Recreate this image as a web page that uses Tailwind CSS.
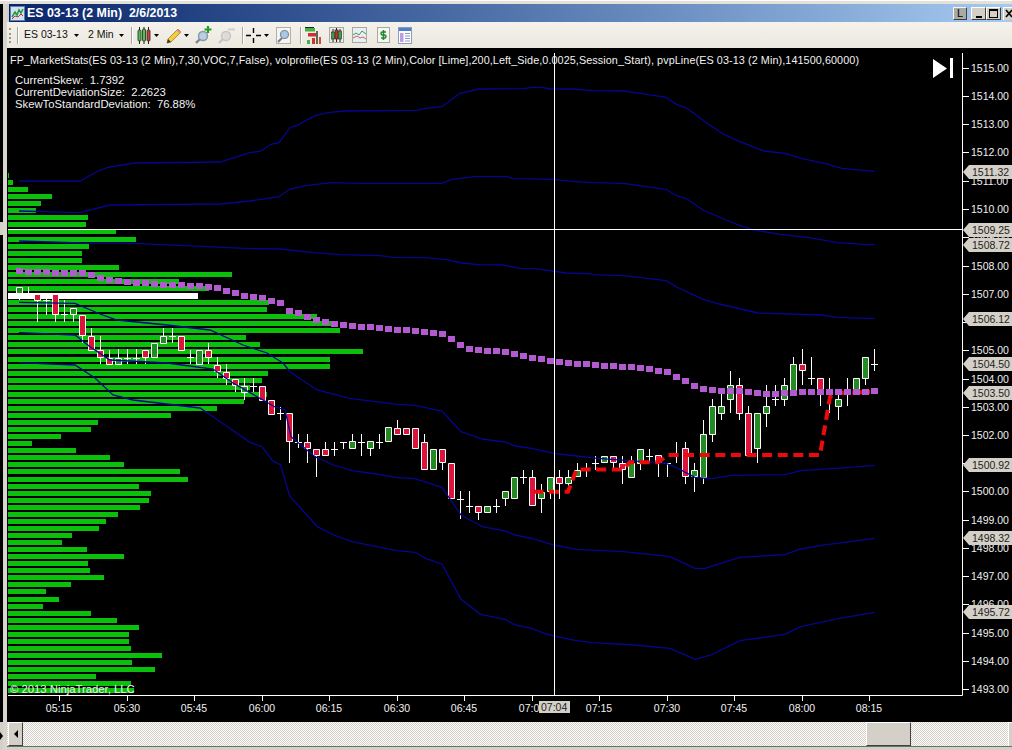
<!DOCTYPE html>
<html>
<head>
<meta charset="utf-8">
<title>ES 03-13 (2 Min) 2/6/2013</title>
<script src="https://cdn.jsdelivr.net/npm/@tailwindcss/browser@4"></script>
</head>
<body class="bg-black">
<div class="w-[1012px] h-[750px] overflow-hidden flex flex-col bg-[#d4d0c8] font-['Liberation_Sans',Arial,sans-serif]">
  <div class="h-[4px] shrink-0 border-t border-white bg-[#e4e1d8]"></div>
  <div class="flex flex-1 min-h-0">
    <!-- left edge -->
    <div class="w-[3px] bg-black flex flex-col">
      <div class="h-[218px] shrink-0"></div>
      <div class="h-[13px] shrink-0 bg-[#d4d0c8]"></div>
      <div class="flex-1"></div>
      <div class="h-[28px] shrink-0 bg-[#d4d0c8] flex items-center">
        <div class="w-0 h-0 border-y-[4px] border-y-transparent border-l-[3px] border-l-black"></div>
      </div>
    </div>
    <div class="w-[4px] bg-[#d8d5cc]"></div>
    <div class="flex-1 min-w-0 flex flex-col">
      <!-- title bar -->
      <div class="h-[18px] shrink-0 flex items-center bg-[#d4d0c8] pl-[2px]">
        <div class="flex-1 h-full flex items-center bg-gradient-to-r from-[#0a246a] to-[#a6caf0]">
          <svg class="ml-[1px] shrink-0" width="15" height="15" viewBox="0 0 15 15">
            <rect x=".5" y=".5" width="14" height="14" fill="#cfe2f5" stroke="#5d7fa8"/>
            <path d="M2 11l3-5 2 3 2-5 2 3 2-4" fill="none" stroke="#2a9a3a" stroke-width="1.6"/>
            <path d="M2 13l3-3 3 1 3-3 2 2" fill="none" stroke="#c03030" stroke-width="1"/>
          </svg>
          <span class="ml-[2px] text-white font-bold text-[12.4px] leading-none whitespace-pre">ES 03-13 (2 Min)  2/6/2013</span>
          <div class="flex-1"></div>
          <div class="w-[14px] h-[13px] flex items-center justify-center bg-[#aaa9a2] border border-t-[#f4f4f4] border-l-[#f4f4f4] border-b-[#404040] border-r-[#404040] text-[11px] leading-none text-black">L</div>
          <div class="ml-[4px] w-[15px] h-[13px] flex items-end justify-center pb-[1px] bg-[#d4d0c8] border border-t-white border-l-white border-b-[#404040] border-r-[#404040]"><div class="w-[6px] h-[2px] bg-black"></div></div>
          <div class="w-[15px] h-[13px] flex items-center justify-center bg-[#d4d0c8] border border-t-white border-l-white border-b-[#404040] border-r-[#404040]"><div class="w-[9px] h-[9px] border border-t-2 border-black"></div></div>
          <div class="ml-[2px] w-[9px] h-[13px] overflow-hidden bg-[#d4d0c8] border-t border-l border-t-white border-l-white">
            <svg width="9" height="12" viewBox="0 0 9 12"><path d="M2 2l6 7M8 2l-6 7" stroke="#000" stroke-width="1.6"/></svg>
          </div>
        </div>
      </div>
      <!-- toolbar -->
      <div class="h-[26px] shrink-0 flex items-center bg-gradient-to-b from-[#f4f2ec] to-[#ebe8df] text-[10.5px] text-[#111]">
        <div class="ml-[2px] w-[3px] h-[15px] border-l-2 border-dotted border-[#9a988f]"></div>
        <div class="ml-[5px] w-[2px] h-[17px] border-l border-r border-l-[#a8a69c] border-r-white"></div>
        <span class="ml-[5px] w-[50px]">ES 03-13</span>
        <svg class="shrink-0" width="5" height="3" viewBox="0 0 5 3"><path d="M0 0h5L2.500 3z"/></svg>
        <span class="ml-[9px] w-[31px]">2 Min</span>
        <svg class="shrink-0" width="5" height="3" viewBox="0 0 5 3"><path d="M0 0h5L2.500 3z"/></svg>
        <div class="ml-[7px] w-[2px] h-[17px] border-l border-r border-l-[#a8a69c] border-r-white"></div>
        <svg class="ml-[4px] shrink-0" width="14" height="17" viewBox="0 0 14 17">
          <path d="M2.500 0v17M7 0v17M11.500 0v17" stroke="#222"/>
          <rect x="1" y="3" width="3" height="11" rx="1" fill="#4fc34f" stroke="#222" stroke-width=".8"/>
          <rect x="5.500" y="2" width="3" height="12" rx="1" fill="#4fc34f" stroke="#222" stroke-width=".8"/>
          <rect x="10" y="3" width="3" height="11" rx="1" fill="#d63a3a" stroke="#222" stroke-width=".8"/>
        </svg>
        <svg class="ml-[3px] shrink-0" width="5" height="3" viewBox="0 0 5 3"><path d="M0 0h5L2.500 3z"/></svg>
        <svg class="ml-[7px] shrink-0" width="16" height="17" viewBox="0 0 16 17">
          <path d="M1 16l1-4L12 2l3 3L5 15z" fill="#f3cf3c" stroke="#a07a20" stroke-width=".8"/>
          <path d="M12 2l3 3-1.500 1.500-3-3z" fill="#e88a8a"/>
          <path d="M1 16l1-4 3 3z" fill="#333"/>
        </svg>
        <svg class="ml-[2px] shrink-0" width="5" height="3" viewBox="0 0 5 3"><path d="M0 0h5L2.500 3z"/></svg>
        <svg class="ml-[6px] shrink-0" width="17" height="18" viewBox="0 0 17 18">
          <path d="M1 17l5-5" stroke="#7a8490" stroke-width="2.400"/>
          <circle cx="8" cy="10" r="4.500" fill="#b8cfe6" stroke="#8a96a4" stroke-width="1.400"/>
          <path d="M13 0v7M9.500 3.500h7" stroke="#22a022" stroke-width="2.200"/>
        </svg>
        <svg class="ml-[6px] shrink-0" width="17" height="18" viewBox="0 0 17 18">
          <path d="M1 17l5-5" stroke="#c6c5c0" stroke-width="2.400"/>
          <circle cx="8" cy="10" r="4.500" fill="#dcdcd8" stroke="#c6c5c0" stroke-width="1.400"/>
          <path d="M10 3.500h7" stroke="#d0cfca" stroke-width="2"/>
        </svg>
        <div class="ml-[7px] w-[2px] h-[17px] border-l border-r border-l-[#a8a69c] border-r-white"></div>
        <svg class="ml-[2px] shrink-0" width="15" height="15" viewBox="0 0 15 15">
          <path d="M7.500 0v5M7.500 10v5M0 7.500h5M10 7.500h5" stroke="#000" stroke-width="1.400"/>
        </svg>
        <svg class="ml-[3px] shrink-0" width="5" height="3" viewBox="0 0 5 3"><path d="M0 0h5L2.500 3z"/></svg>
        <svg class="ml-[7px] shrink-0" width="15" height="17" viewBox="0 0 15 17">
          <rect x=".5" y=".5" width="14" height="16" fill="#f4f4f0" stroke="#b0b0a8"/>
          <path d="M2 15l4-4" stroke="#778" stroke-width="2"/>
          <circle cx="8.500" cy="7.500" r="4" fill="#a9c8e6" stroke="#7f8a96" stroke-width="1.200"/>
        </svg>
        <div class="ml-[9px] w-[2px] h-[17px] border-l border-r border-l-[#a8a69c] border-r-white"></div>
        <svg class="ml-[3px] shrink-0" width="16" height="18" viewBox="0 0 16 18">
          <path d="M0 1.500h9" stroke="#222"/>
          <rect x="0" y="2" width="10" height="3.500" fill="#45b045"/>
          <rect x="3" y="7" width="9" height="3.500" fill="#d03030"/>
          <rect x="11" y="5" width="2" height="13" fill="#5a6a5a"/>
          <rect x="14" y="11" width="2" height="7" fill="#d05030"/>
          <rect x="7" y="12" width="3" height="6" fill="#d03030"/>
          <rect x="2" y="14" width="3" height="4" fill="#45b045"/>
        </svg>
        <svg class="ml-[8px] shrink-0" width="15" height="16" viewBox="0 0 15 16">
          <rect x=".5" y=".5" width="14" height="15" fill="#ecebe4" stroke="#a8a8a0"/>
          <path d="M4 2v13M7.500 1v14M11 2v13" stroke="#222"/>
          <rect x="2.500" y="5" width="3" height="7" fill="#3f9f3f" stroke="#222" stroke-width=".6"/>
          <rect x="6" y="3" width="3" height="9" fill="#c03030" stroke="#222" stroke-width=".6"/>
          <rect x="9.500" y="4" width="3" height="8" fill="#3f9f3f" stroke="#222" stroke-width=".6"/>
        </svg>
        <svg class="ml-[8px] shrink-0" width="15" height="16" viewBox="0 0 15 16">
          <rect x=".5" y=".5" width="14" height="15" fill="#e6eef6" stroke="#a8a8a0"/>
          <path d="M1 8l3-2 3 2 3-4 4 3" fill="none" stroke="#3f9f4f"/>
          <path d="M1 11l4-2 3 2 3-1 3 2" fill="none" stroke="#d06060"/>
        </svg>
        <svg class="ml-[10px] shrink-0" width="13" height="16" viewBox="0 0 13 16">
          <rect x=".5" y=".5" width="12" height="15" fill="#f6f6f2" stroke="#a8a8a0"/>
          <path d="M9 5H5.500a1.500 1.500 0 0 0 0 3h2a1.500 1.500 0 0 1 0 3H4M6.500 3v10" fill="none" stroke="#1c8a2e" stroke-width="1.500"/>
        </svg>
        <svg class="ml-[8px] shrink-0" width="14" height="17" viewBox="0 0 14 17">
          <rect x=".5" y=".5" width="13" height="16" fill="#fff" stroke="#8a9ac0"/>
          <rect x="1" y="1" width="12" height="3" fill="#4f7fc8"/>
          <rect x="2" y="6" width="3.500" height="9" fill="#b9a0e0"/>
          <path d="M7 6.500h5M7 9h5M7 11.500h5M7 14h5" stroke="#8a9ac0"/>
        </svg>
      </div>
      <!-- chart -->
      <div class="h-[674px] shrink-0 bg-black">
        <svg width="1005" height="674" viewBox="7 48 1005 674" class="block" font-size="10.500">
          <path fill="none" stroke="#0ac00a" stroke-width="5" d="M8 175.500H9M8 182.500H13M8 189.500H28M8 196.500H52M8 203.500H41M8 210.500H36M8 217.500H88M8 224.500H86M8 231.500H116M8 239.500H136M8 246.500H89M8 253.500H82M8 260.500H82M8 267.500H119M8 274.500H232M8 281.500H179M8 288.500H209M8 302.500H269M8 309.500H267M8 316.500H317M8 323.500H333M8 330.500H340M8 337.500H246M8 344.500H260M8 351.500H363M8 359.500H330M8 366.500H330M8 373.500H268M8 380.500H262M8 387.500H250M8 394.500H267M8 401.500H244M8 408.500H217M8 415.500H171M8 422.500H98M8 429.500H91M8 436.500H61M8 443.500H32M8 450.500H76M8 457.500H110M8 464.500H124M8 471.500H180M8 479.500H188M8 486.500H139M8 493.500H151M8 500.500H149M8 507.500H140M8 514.500H118M8 521.500H106M8 528.500H99M8 535.500H72M8 542.500H62M8 549.500H87M8 556.500H124M8 563.500H88M8 570.500H90M8 577.500H104M8 584.500H71M8 591.500H46M8 599.500H59M8 606.500H43M8 613.500H91M8 620.500H117M8 627.500H139M8 634.500H129M8 641.500H129M8 648.500H131M8 655.500H162M8 662.500H132M8 669.500H155M8 676.500H96M8 683.500H131M8 690.500H134"/>
          <rect x="8" y="293" width="190" height="6" fill="#fff"/>
          <!-- wicks and crosses -->
          <path fill="none" stroke="#fff" d="M19.500 287V300M28.500 287V293M37.500 294V322M46.500 298V315M55.500 294V322M64.500 300V322M73.500 308V322M82.500 315V343M91.500 328V350M100.500 336V364M109.500 350V364M118.500 349V364M127.500 349V364M136.500 349V364M145.500 350V364M154.500 343V357M163.500 328V343M172.500 328V343M181.500 336V350M190.500 350V364M199.500 350V364M208.500 343V364M217.500 357V378M226.500 364V385M235.500 379V392M244.500 378V400M253.500 378V392M262.500 386V400M271.500 400V414M280.500 407V420M289.500 413V463M298.500 434V448M307.500 434V463M316.500 449V477M325.500 442V456M334.500 442V456M343.500 442V449M352.500 434V449M361.500 434V456M370.500 441V456M379.500 434V449M388.500 427V442M397.500 420V435M406.500 428V435M415.500 428V449M424.500 434V470M433.500 449V470M442.500 449V470M451.500 463V499M460.500 491V519M469.500 491V513M478.500 506V520M487.500 506V513M496.500 499V513M505.500 491V506M514.500 477V499M523.500 470V484M532.500 470V506M541.500 484V513M550.500 477V499M559.500 470V499M568.500 470V492M577.500 463V477M586.500 463V477M595.500 456V470M604.500 456V463M613.500 456V470M622.500 456V484M631.500 456V477M640.500 449V470M649.500 449V463M658.500 455V477M667.500 463V477M676.500 442V463M685.500 442V484M694.500 463V492M703.500 420V484M712.500 399V442M721.500 392V420M730.500 371V413M739.500 378V420M748.500 406V455M757.500 413V463M766.500 385V427M775.500 385V406M784.500 378V406M793.500 357V392M802.500 349V385M811.500 357V385M820.500 378V406M829.500 378V413M838.500 392V420M847.500 378V406M856.500 378V392M865.500 357V385M874.500 349V371"/>
          <path fill="none" stroke="#fff" d="M43 300.500h7M61 314.500h7M124 358.500h7M133 358.500h7M169 336.500h7M187 357.500h7M250 386.500h7M277 413.500h7M295 442.500h7M331 449.500h7M340 442.500h7M358 442.500h7M376 442.500h7M457 499.500h7M466 506.500h7M493 506.500h7M520 477.500h7M583 470.500h7M592 463.500h7M646 456.500h7M664 463.500h7M772 399.500h7M808 378.500h7M871 364.500h7"/>
          <!-- green bodies -->
          <path fill="#228b22" stroke="#fff" d="M16.500 287.500h6v6h-6zM70.500 308.500h6v6h-6zM115.500 358.500h6v6h-6zM151.500 343.500h6v14h-6zM160.500 336.500h6v7h-6zM196.500 350.500h6v14h-6zM241.500 386.500h6v6h-6zM349.500 441.500h6v7h-6zM367.500 441.500h6v7h-6zM385.500 427.500h6v14h-6zM430.500 449.500h6v20h-6zM484.500 506.500h6v6h-6zM502.500 491.500h6v7h-6zM511.500 477.500h6v21h-6zM538.500 492.500h6v6h-6zM547.500 477.500h6v14h-6zM565.500 477.500h6v6h-6zM574.500 470.500h6v6h-6zM601.500 456.500h6v6h-6zM628.500 463.500h6v14h-6zM637.500 449.500h6v14h-6zM691.500 470.500h6v6h-6zM700.500 434.500h6v43h-6zM709.500 406.500h6v28h-6zM718.500 406.500h6v7h-6zM727.500 385.500h6v14h-6zM754.500 413.500h6v35h-6zM763.500 406.500h6v7h-6zM781.500 385.500h6v14h-6zM790.500 364.500h6v28h-6zM835.500 399.500h6v7h-6zM853.500 378.500h6v14h-6zM862.500 357.500h6v21h-6z"/>
          <!-- red bodies -->
          <path fill="#dc143c" stroke="#fff" d="M34.500 294.500h6v6h-6zM52.500 294.500h6v20h-6zM79.500 315.500h6v20h-6zM88.500 336.500h6v14h-6zM97.500 350.500h6v7h-6zM106.500 358.500h6v6h-6zM142.500 350.500h6v7h-6zM178.500 336.500h6v14h-6zM205.500 350.500h6v7h-6zM214.500 365.500h6v6h-6zM223.500 372.500h6v6h-6zM232.500 379.500h6v6h-6zM259.500 386.500h6v14h-6zM268.500 400.500h6v14h-6zM286.500 413.500h6v28h-6zM304.500 442.500h6v6h-6zM313.500 449.500h6v6h-6zM322.500 449.500h6v6h-6zM394.500 428.500h6v6h-6zM403.500 428.500h6v6h-6zM412.500 428.500h6v20h-6zM421.500 442.500h6v27h-6zM439.500 449.500h6v13h-6zM448.500 463.500h6v35h-6zM475.500 506.500h6v6h-6zM529.500 477.500h6v28h-6zM556.500 477.500h6v6h-6zM610.500 456.500h6v6h-6zM619.500 463.500h6v6h-6zM655.500 455.500h6v7h-6zM682.500 448.500h6v28h-6zM736.500 385.500h6v28h-6zM745.500 413.500h6v42h-6zM799.500 364.500h6v6h-6zM817.500 378.500h6v14h-6z"/>
          <!-- deviation bands -->
          <g fill="none" stroke="#060690" stroke-width="1.300">
            <path d="M19 181L80 181L100 170L110 167L135 163L220 162L250 152.700L261 151L271 144.300L279 142.700L290 127.700L297 125.300L315 115.700L328 112.700L344 111L417 110.300L425.500 108.300L442 106.700L460 93.300L479 89L523.500 88.700L532 87.300L542 87.300L550 89L572 89L593 90.700L623.500 91L642 93.700L666 97.300L676.500 104.300L687 108.300L705 121.700L723.500 134.300L740 141.700L764 151L785 153.300L801 158.300L825.500 163.700L842 168.300L874.500 171.300"/>
            <path d="M19 211L80 212.700L110 205L220 204L250 201L261 199.300L279 196.700L290 189L307 185.300L331.600 182.700L360 183.300L442 183.300L452 179.300L474.500 176.700L507 176.700L513 178.700L554 179.300L572 181.300L593 182.700L623.500 183.300L666 189.300L676.500 195.700L687 199L703 210L723.500 219L740 225.700L756 230.300L780.600 234.300L809 237.700L838 242.700L862 244.300L874.500 244.700"/>
            <path d="M19 241L80 243L133 243.300L207 246.700L250 248.700L280.600 249L311 252.300L340 254.700L380.600 255.700L393 257.300L425.500 257.700L446 259.700L462 263L478.600 264.700L503 265L519.400 268.300L536 268.700L566 273L589 273.700L593 274.700L623.500 275.700L666 280.700L676.500 287L703 299.300L719.400 304L758 313L821.400 315L838 317.300L874.500 318.700"/>
            <path d="M19 302.300L75 303.300L100 314L117 320L167 325L210 330L243 345L267 353L283 363L290 371.700L317 390L350 398.300L397 404.300L415 405.300L442 411L461 431.700L482.600 439L507 442.300L515 446L531.600 448.300L554 453.300L576.500 456L597 458.300L629.600 460.700L666 463.300L676.500 467.700L695 477.300L711 478.700L731.600 475.300L784.700 474.700L801 470.700L846 467.700L874.500 465.300"/>
            <path d="M19 332.700L75 335L90 346.700L110 360L167 363L213 369L233 383L263 400L274.500 406.700L285 410L291 436.700L315 456.700L333.700 465L352 470.700L376.500 474L395 477.300L415 478.700L442 487.300L461 515L482.600 526.700L505 531L515 535L531.600 538.300L554 545L576.500 549.300L623.500 551.700L670 556.700L695 568.300L705 568.300L740 557.300L784.700 554.700L801 549L821.400 545.300L874.500 538.300"/>
            <path d="M19 362.700L75 365L95 378L113 395L133 400L200 408L225 425L250 442.300L262 446.700L272.400 460.700L280.600 465L289.600 496L317.300 526.700L333.700 535L352 541.700L376.500 546.700L397 550.700L415 552.300L425.500 558.300L442 564L461 599.300L480.600 614.300L505 619.300L515 625L531.600 628.300L544 633.300L554 636L576.500 640.700L593 642.700L633.700 645L670 648.300L695 659.300L711 655L740 640.700L784.700 634.300L801 626.700L838 618.700L874.500 612.300"/>
          </g>
          <!-- pvp line -->
          <path fill="none" stroke="#ee0a0a" stroke-width="4" stroke-dasharray="10 5.600" d="M533.500 491.700L568 491.700L576.500 469.500L623.500 469.500L629.600 462.300L658 462.300L668 455L820 455L830 397L835 393L870 392"/>
          <!-- point of value -->
          <path fill="none" stroke="#b45ad0" stroke-width="6" d="M16 271h7M25 272h7M34 272h7M43 272h7M52 273h7M61 273h7M70 273h7M79 273h7M88 275h7M97 278h7M106 280h7M115 281h7M124 282h7M133 283h7M142 283h7M151 284h7M160 285h7M169 285h7M178 285h7M187 286h7M196 286h7M205 287h7M214 288h7M223 291h7M232 293h7M241 296h7M250 297h7M259 298h7M268 301h7M277 303h7M286 311h7M295 313h7M304 317h7M313 320h7M322 322h7M331 324h7M340 325h7M349 326h7M358 327h7M367 327h7M376 328h7M385 329h7M394 330h7M403 330h7M412 331h7M421 332h7M430 333h7M439 334h7M448 339h7M457 345h7M466 349h7M475 350h7M484 351h7M493 351h7M502 352h7M511 354h7M520 356h7M529 358h7M538 359h7M547 361h7M556 362h7M565 363h7M574 364h7M583 364h7M592 365h7M601 366h7M610 366h7M619 367h7M628 367h7M637 368h7M646 369h7M655 371h7M664 372h7M673 377h7M682 381h7M691 386h7M700 389h7M709 390h7M718 391h7M727 391h7M736 391h7M745 392h7M754 393h7M763 394h7M772 394h7M781 393h7M790 393h7M799 392h7M808 392h7M817 392h7M826 392h7M835 392h7M844 392h7M853 392h7M862 392h7M871 391h7"/>
          <!-- crosshair -->
          <path stroke="#fff" d="M554.500 53V695M8 229.500H962"/>
          <!-- axes -->
          <path fill="none" stroke="#fff" d="M962.500 53V695.500H8"/>
          <path stroke="#fff" d="M963 68.500h6M963 96.500h6M963 124.500h6M963 152.500h6M963 181.500h6M963 209.500h6M963 237.500h6M963 266.500h6M963 294.500h6M963 322.500h6M963 350.500h6M963 379.500h6M963 407.500h6M963 435.500h6M963 463.500h6M963 491.500h6M963 520.500h6M963 548.500h6M963 576.500h6M963 604.500h6M963 633.500h6M963 661.500h6M963 689.500h6"/>
          <path stroke="#fff" d="M59.500 696v5M127.500 696v5M194.500 696v5M262.500 696v5M329.500 696v5M397.500 696v5M464.500 696v5M532.500 696v5M599.500 696v5M667.500 696v5M734.500 696v5M802.500 696v5M869.500 696v5"/>
          <g fill="#f0f0f0">
            <text x="971" y="72">1515.00</text><text x="971" y="100">1514.00</text><text x="971" y="128">1513.00</text><text x="971" y="156">1512.00</text><text x="971" y="185">1511.00</text><text x="971" y="213">1510.00</text><text x="971" y="241">1509.00</text><text x="971" y="270">1508.00</text><text x="971" y="298">1507.00</text><text x="971" y="326">1506.00</text><text x="971" y="354">1505.00</text><text x="971" y="383">1504.00</text><text x="971" y="411">1503.00</text><text x="971" y="439">1502.00</text><text x="971" y="467">1501.00</text><text x="971" y="495">1500.00</text><text x="971" y="524">1499.00</text><text x="971" y="552">1498.00</text><text x="971" y="580">1497.00</text><text x="971" y="608">1496.00</text><text x="971" y="637">1495.00</text><text x="971" y="665">1494.00</text><text x="971" y="693">1493.00</text>
          </g>
          <g fill="#f0f0f0" text-anchor="middle">
            <text x="59" y="712">05:15</text><text x="127" y="712">05:30</text><text x="194" y="712">05:45</text><text x="262" y="712">06:00</text><text x="329" y="712">06:15</text><text x="397" y="712">06:30</text><text x="464" y="712">06:45</text><text x="532" y="712">07:00</text><text x="599" y="712">07:15</text><text x="667" y="712">07:30</text><text x="734" y="712">07:45</text><text x="802" y="712">08:00</text><text x="869" y="712">08:15</text>
          </g>
          <!-- value tags -->
          <g fill="#d4d0c8">
            <path d="M963 172l6-7h43v14h-43zM963 230l6-7h43v14h-43zM963 245l6-7h43v14h-43zM963 319l6-7h43v14h-43zM963 364l6-7h43v14h-43zM963 393l6-7h43v14h-43zM963 465l6-7h43v14h-43zM963 538l6-7h43v14h-43zM963 612l6-7h43v14h-43z"/>
            <rect x="539" y="701" width="31" height="12"/>
          </g>
          <g fill="#222">
            <text x="972" y="176">1511.32</text><text x="972" y="234">1509.25</text><text x="972" y="249">1508.72</text><text x="972" y="323">1506.12</text><text x="972" y="368">1504.50</text><text x="972" y="397">1503.50</text><text x="972" y="469">1500.92</text><text x="972" y="542">1498.32</text><text x="972" y="616">1495.72</text>
            <text x="541" y="711">07:04</text>
          </g>
          <!-- labels -->
          <g fill="#f2f2f2" font-size="11.300">
            <text x="10" y="64" font-size="10.800" textLength="849" lengthAdjust="spacing" xml:space="preserve">FP_MarketStats(ES 03-13 (2 Min),7,30,VOC,7,False), volprofile(ES 03-13 (2 Min),Color [Lime],200,Left_Side,0.0025,Session_Start), pvpLine(ES 03-13 (2 Min),141500,60000)</text>
            <text x="15" y="84" xml:space="preserve">CurrentSkew:  1.7392</text>
            <text x="15" y="96" xml:space="preserve">CurrentDeviationSize:  2.2623</text>
            <text x="15" y="108" xml:space="preserve">SkewToStandardDeviation:  76.88%</text>
            <text x="10" y="693">© 2013 NinjaTrader, LLC</text>
          </g>
          <path fill="#fff" d="M933 59l14 9.500-14 9.500z"/>
          <rect x="950" y="58" width="3" height="20" fill="#fff"/>
        </svg>
      </div>
      <!-- scrollbar -->
      <div class="h-[24px] shrink-0 flex bg-[repeating-conic-gradient(#d4d0c8_0_25%,#ffffff_0_50%)] bg-[length:2px_2px]">
        <div class="ml-[1px] w-[15px] h-full flex items-center justify-center bg-[#d4d0c8] border border-t-white border-l-white border-b-[#404040] border-r-[#404040]">
          <div class="w-0 h-0 border-y-[4px] border-y-transparent border-r-[4px] border-r-black"></div>
        </div>
        <div class="w-[843px]"></div>
        <div class="w-[45px] h-full bg-[#d4d0c8] border border-t-white border-l-white border-b-[#404040] border-r-[#404040]"></div>
        <div class="ml-[97px] flex-1 h-full bg-[#d4d0c8] border-l border-t border-t-white border-l-white"></div>
      </div>
      <div class="flex-1 border-t border-[#6e6e6e] bg-[#d4d0c8]"></div>
    </div>
  </div>
</div>
</body>
</html>
